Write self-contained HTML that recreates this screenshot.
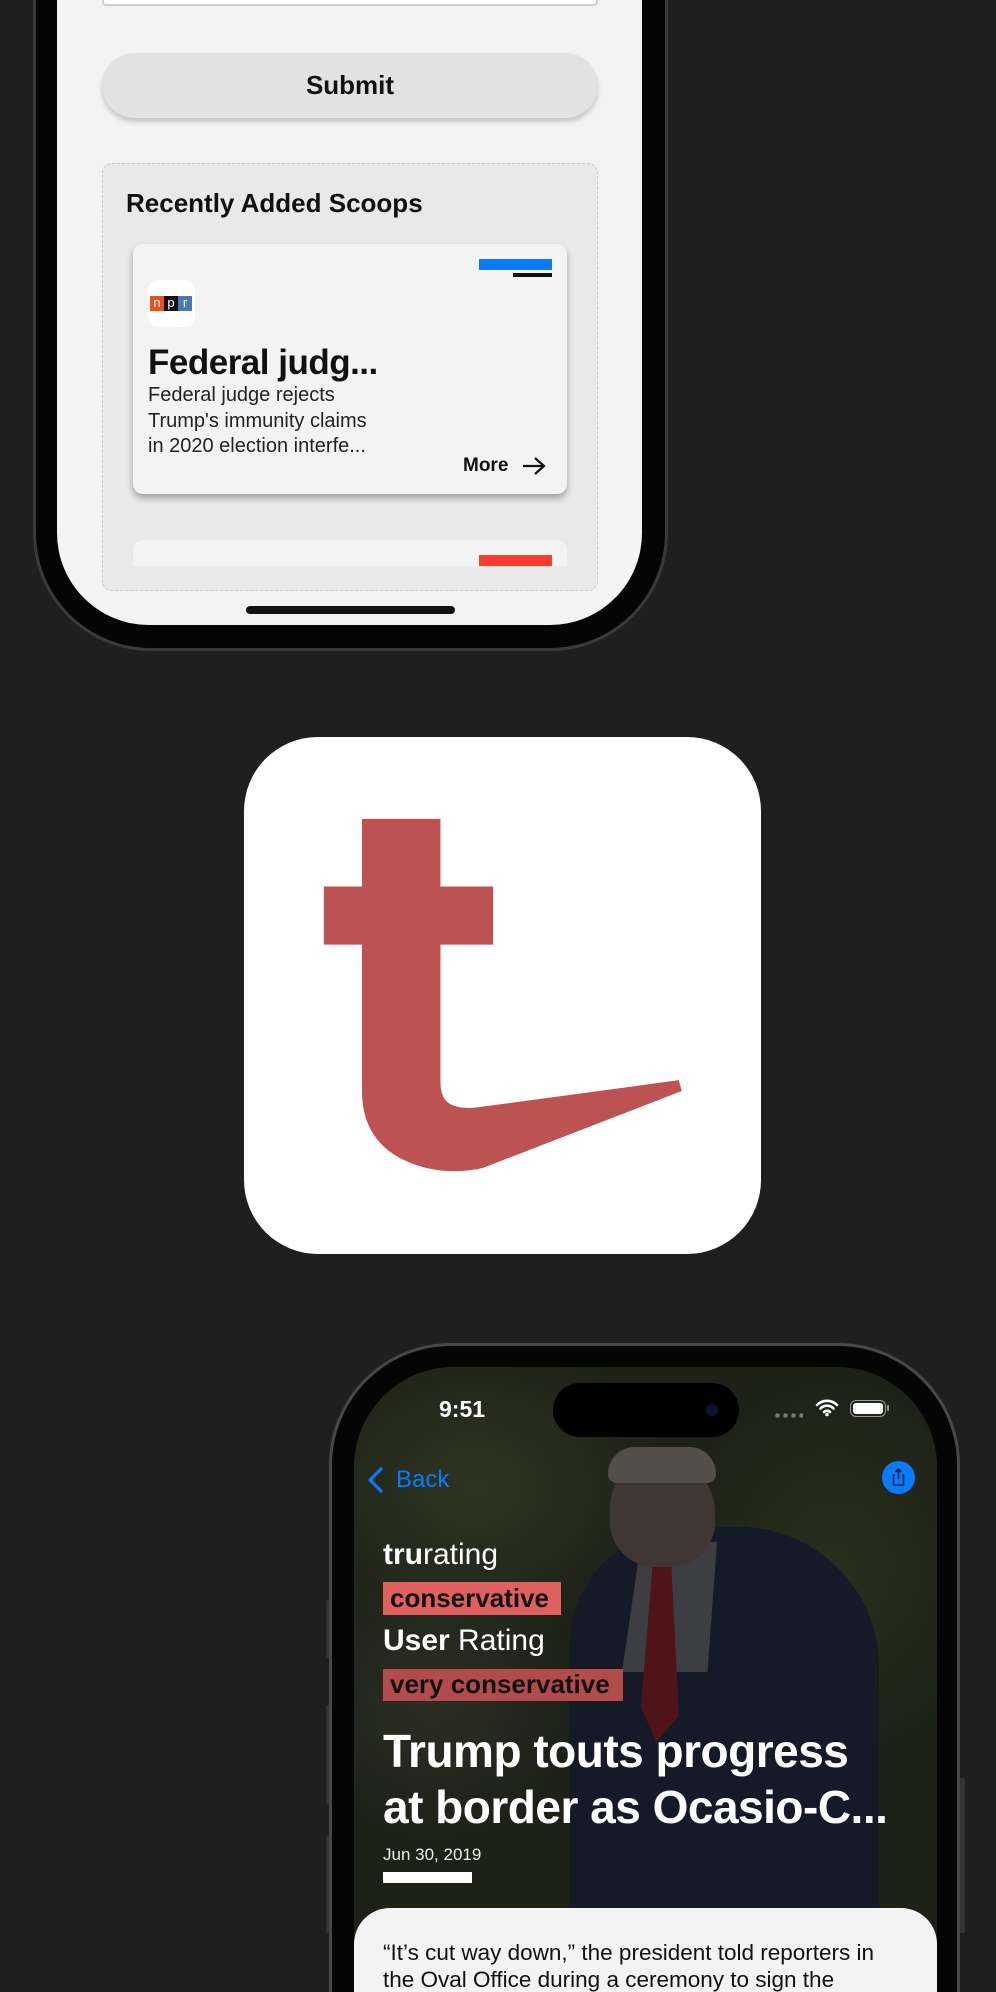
<!DOCTYPE html>
<html><head><meta charset="utf-8"><style>
*{margin:0;padding:0;box-sizing:border-box}
html,body{width:996px;height:1992px;overflow:hidden;background:#1f1f1f}
body{font-family:"Liberation Sans",sans-serif}
#w{position:relative;width:996px;height:1992px;overflow:hidden;background:#1f1f1f}
.abs{position:absolute}
</style></head><body><div id="w">

<!-- Top phone -->
<div class="abs" style="left:33px;top:-200px;width:635px;height:851px;border-radius:118px;background:#3a3a3c"></div>
<div class="abs" style="left:36px;top:-200px;width:629px;height:848px;border-radius:115px;background:#050505"></div>
<div class="abs" style="left:57px;top:-200px;width:585px;height:825px;border-radius:92px;background:#f3f3f3;overflow:hidden">
  <div class="abs" style="left:45px;top:180px;width:496px;height:26px;border:2px solid #cfcfcf;border-top:none;background:#fff;border-radius:0 0 4px 4px"></div>
  <div class="abs" style="left:45px;top:253px;width:496px;height:65px;border-radius:33px;background:#e2e2e2;box-shadow:0 4px 5px rgba(0,0,0,.18);text-align:center;line-height:65px;font-weight:bold;font-size:26px;color:#111">Submit</div>
  <div class="abs" style="left:45px;top:363px;width:496px;height:428px;border:1.5px dashed #c9c9c9;border-radius:10px;background:#e9e9e9;overflow:hidden">
    <div class="abs" style="left:23px;top:24px;font-weight:bold;font-size:26px;color:#111">Recently Added Scoops</div>
    <div class="abs" style="left:30px;top:80px;width:434px;height:250px;border-radius:10px;background:#f3f3f3;box-shadow:0 4px 7px rgba(0,0,0,.32)">
      <div class="abs" style="left:346px;top:15px;width:73px;height:11px;background:#0a7bff"></div>
      <div class="abs" style="left:380px;top:29px;width:39px;height:4px;background:#111"></div>
      <div class="abs" style="left:15px;top:36px;width:47px;height:47px;border-radius:10px;background:#fff">
        <div class="abs" style="left:2px;top:16px;width:14px;height:15px;background:#e4531f;color:#fff;font-size:13px;line-height:14px;text-align:center">n</div>
        <div class="abs" style="left:16px;top:16px;width:14px;height:15px;background:#111;color:#fff;font-size:13px;line-height:14px;text-align:center">p</div>
        <div class="abs" style="left:30px;top:16px;width:14px;height:15px;background:#4a78b8;color:#fff;font-size:13px;line-height:14px;text-align:center">r</div>
      </div>
      <div class="abs" style="left:15px;top:99px;font-weight:bold;font-size:35px;line-height:40px;color:#111;letter-spacing:-.5px">Federal judg...</div>
      <div class="abs" style="left:15px;top:139px;font-size:20px;line-height:25.5px;color:#222">Federal judge rejects<br>Trump's immunity claims<br>in 2020 election interfe...</div>
      <div class="abs" style="left:330px;top:211px;font-weight:bold;font-size:19px;color:#111">More</div>
      <svg class="abs" style="left:388px;top:211px" width="26" height="22" viewBox="0 0 26 22"><path d="M2 11H23M14 3L23 11L14 19" stroke="#111" stroke-width="2.2" fill="none"/></svg>
    </div>
    <div class="abs" style="left:30px;top:376px;width:434px;height:40px;border-radius:10px 10px 0 0;background:#f3f3f3"></div>
    <div class="abs" style="left:376px;top:391px;width:73px;height:11px;background:#ff3b30"></div>
    <div class="abs" style="left:0;top:402px;width:496px;height:30px;background:#e9e9e9"></div>
  </div>
  <div class="abs" style="left:189px;top:806px;width:209px;height:8px;border-radius:4px;background:#111"></div>
</div>

<!-- Icon -->
<div class="abs" style="left:244px;top:737px;width:517px;height:517px;border-radius:74px;background:#fff"></div>
<svg class="abs" style="left:240px;top:730px" width="530" height="530" viewBox="0 0 1568 1568">
<path fill="#bc5252" d="M361 263H593V463H749V635H593V1040C593 1100 620 1120 690 1118L1298 1036L1307 1068L720 1295C650 1312 560 1310 480 1270C400 1230 361 1160 361 1070V635H248V463H361Z"/>
</svg>

<!-- Bottom phone -->
<div class="abs" style="left:326px;top:1600px;width:6px;height:58px;border-radius:2px;background:#333"></div>
<div class="abs" style="left:326px;top:1705px;width:6px;height:99px;border-radius:2px;background:#333"></div>
<div class="abs" style="left:326px;top:1836px;width:6px;height:97px;border-radius:2px;background:#333"></div>
<div class="abs" style="left:959px;top:1778px;width:6px;height:155px;border-radius:2px;background:#333"></div>
<div class="abs" style="left:329px;top:1343px;width:631px;height:649px;border-radius:122px 122px 0 0;background:#48484a"></div>
<div class="abs" style="left:332px;top:1346px;width:625px;height:646px;border-radius:119px 119px 0 0;background:#050505"></div>
<div class="abs" style="left:354px;top:1367px;width:583px;height:625px;border-radius:100px 100px 0 0;overflow:hidden;background:#23281b">
  <div class="abs" style="left:0;top:0;width:583px;height:600px;background:radial-gradient(ellipse 200px 160px at 120px 120px,#363d27,transparent),radial-gradient(ellipse 180px 200px at 480px 200px,#2f3621,transparent),radial-gradient(ellipse 150px 150px at 80px 330px,#33352a,transparent),#21261a"></div>
  <!-- person -->
  <div class="abs" style="left:215px;top:160px;width:310px;height:440px;border-radius:120px 140px 0 0;background:#181e2e"></div>
  <div class="abs" style="left:268px;top:175px;width:95px;height:130px;background:#46474b;clip-path:polygon(20% 0,100% 0,90% 100%,0 100%)"></div>
  <div class="abs" style="left:287px;top:200px;width:38px;height:175px;background:#5a161c;clip-path:polygon(30% 0,80% 0,100% 85%,40% 100%,0 80%)"></div>
  <div class="abs" style="left:256px;top:90px;width:105px;height:110px;border-radius:50px 55px 45px 45px;background:#4a3f3a"></div>
  <div class="abs" style="left:254px;top:80px;width:108px;height:36px;border-radius:60px 60px 20px 20px;background:#5f5a52"></div>
  <div class="abs" style="left:0;top:0;width:583px;height:600px;background:rgba(0,0,0,.12)"></div>
  <!-- status -->
  <div class="abs" style="left:85px;top:29px;color:#fff;font-weight:bold;font-size:23px">9:51</div>
  <div class="abs" style="left:421px;top:46px;width:28px;height:5px;background:radial-gradient(circle at 2.5px 2.5px,#777 2px,transparent 2.5px) 0 0/8px 5px"></div>
  <svg class="abs" style="left:461px;top:31px" width="24" height="19" viewBox="0 0 24 19"><path d="M2 7A14 14 0 0 1 22 7M5.5 10.5A9 9 0 0 1 18.5 10.5M9 14A4 4 0 0 1 15 14" stroke="#fff" stroke-width="2.6" fill="none" stroke-linecap="round"/><circle cx="12" cy="16.5" r="1.8" fill="#fff"/></svg>
  <div class="abs" style="left:496px;top:33px;width:36px;height:17px;border:1.5px solid #999;border-radius:6px;padding:2px"><div style="width:100%;height:100%;background:#fff;border-radius:3px"></div></div>
  <div class="abs" style="left:533px;top:38px;width:2px;height:6px;background:#999;border-radius:1px"></div>
  <!-- nav -->
  <svg class="abs" style="left:12px;top:99px" width="20" height="28" viewBox="0 0 20 28"><path d="M15 3L4 14L15 25" stroke="#0a7bff" stroke-width="3.2" fill="none" stroke-linecap="round" stroke-linejoin="round"/></svg>
  <div class="abs" style="left:42px;top:99px;color:#0a7bff;font-size:24px">Back</div>
  <div class="abs" style="left:528px;top:94px;width:33px;height:33px;border-radius:50%;background:#0a7bff"></div>
  <svg class="abs" style="left:535px;top:100px" width="19" height="20" viewBox="0 0 19 20"><path d="M6 8H4.5V18H14.5V8H13M9.5 12V2M6.5 5L9.5 2L12.5 5" stroke="#0b2140" stroke-width="1.6" fill="none"/></svg>
  <!-- ratings -->
  <div class="abs" style="left:29px;top:171px;color:#fff;font-size:30px"><b>tru</b>rating</div>
  <div class="abs" style="left:29px;top:215px;width:178px;height:33px;background:#e0605f"></div>
  <div class="abs" style="left:36px;top:216px;color:#111;font-weight:bold;font-size:26px">conservative</div>
  <div class="abs" style="left:29px;top:257px;color:#fff;font-size:30px"><b>User</b> Rating</div>
  <div class="abs" style="left:29px;top:302px;width:240px;height:32px;background:#b34b4b"></div>
  <div class="abs" style="left:36px;top:302px;color:#111;font-weight:bold;font-size:26px">very conservative</div>
  <div class="abs" style="left:29px;top:356px;color:#fff;font-weight:bold;font-size:46px;line-height:56px;white-space:nowrap;letter-spacing:-.5px">Trump touts progress<br>at border as Ocasio-C...</div>
  <div class="abs" style="left:29px;top:478px;color:#eee;font-size:17px">Jun 30, 2019</div>
  <div class="abs" style="left:29px;top:505px;width:89px;height:11px;background:#fff"></div>
  <div class="abs" style="left:0;top:541px;width:583px;height:200px;border-radius:36px 36px 0 0;background:#f3f3f3">
    <div class="abs" style="left:29px;top:31px;color:#111;font-size:22.5px;line-height:27px;white-space:nowrap">“It’s cut way down,” the president told reporters in<br>the Oval Office during a ceremony to sign the</div>
  </div>
</div>
<div class="abs" style="left:553px;top:1383px;width:186px;height:54px;border-radius:27px;background:#000"></div>
<div class="abs" style="left:706px;top:1404px;width:12px;height:12px;border-radius:50%;background:#0e1530"></div>

</div></body></html>
